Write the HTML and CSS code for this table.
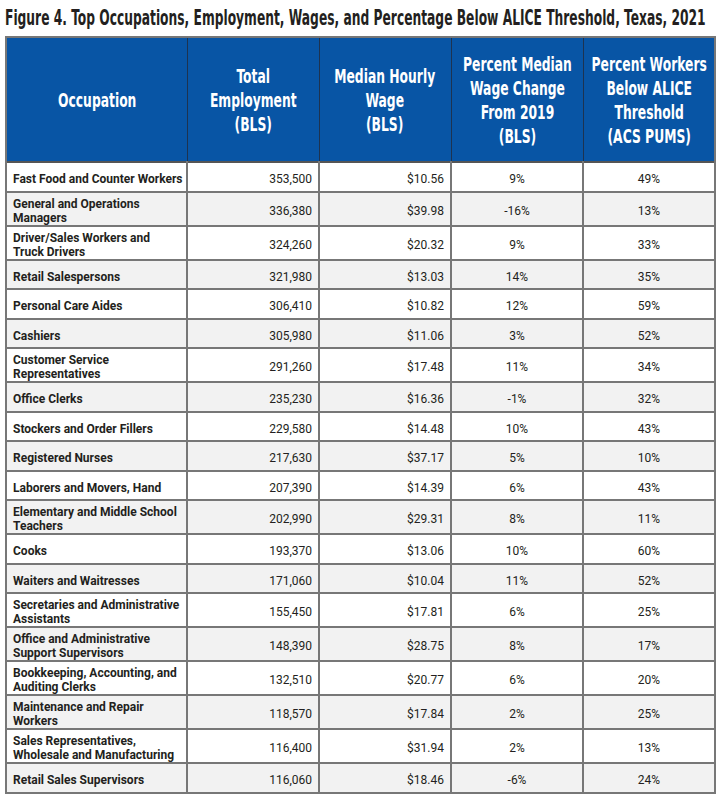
FILE: index.html
```html
<!DOCTYPE html>
<html>
<head>
<meta charset="utf-8">
<link rel="stylesheet" href="styles.css">
</head>
<body>
<div class="page">
  <h1 class="title"><span class="cond">Figure 4. Top Occupations, Employment, Wages, and Percentage Below ALICE Threshold, Texas, 2021</span></h1>
  <table class="data">
    <colgroup>
      <col class="c-occ"><col class="c-num"><col class="c-num"><col class="c-num"><col>
    </colgroup>
    <thead>
      <tr>
        <th><div class="hwrap"><span class="cond">Occupation</span></div></th>
        <th><div class="hwrap"><span class="cond">Total<br>Employment<br>(BLS)</span></div></th>
        <th><div class="hwrap"><span class="cond">Median Hourly<br>Wage<br>(BLS)</span></div></th>
        <th><div class="hwrap"><span class="cond">Percent Median<br>Wage Change<br>From 2019<br>(BLS)</span></div></th>
        <th><div class="hwrap"><span class="cond">Percent Workers<br>Below ALICE<br>Threshold<br>(ACS PUMS)</span></div></th>
      </tr>
    </thead>
    <tbody>
      <tr><td class="occ">Fast Food and Counter Workers</td><td class="r">353,500</td><td class="r">$10.56</td><td class="c">9%</td><td class="c">49%</td></tr>
      <tr class="two"><td class="occ">General and Operations<br>Managers</td><td class="r">336,380</td><td class="r">$39.98</td><td class="c">-16%</td><td class="c">13%</td></tr>
      <tr class="two"><td class="occ">Driver/Sales Workers and<br>Truck Drivers</td><td class="r">324,260</td><td class="r">$20.32</td><td class="c">9%</td><td class="c">33%</td></tr>
      <tr><td class="occ">Retail Salespersons</td><td class="r">321,980</td><td class="r">$13.03</td><td class="c">14%</td><td class="c">35%</td></tr>
      <tr><td class="occ">Personal Care Aides</td><td class="r">306,410</td><td class="r">$10.82</td><td class="c">12%</td><td class="c">59%</td></tr>
      <tr><td class="occ">Cashiers</td><td class="r">305,980</td><td class="r">$11.06</td><td class="c">3%</td><td class="c">52%</td></tr>
      <tr class="two"><td class="occ">Customer Service<br>Representatives</td><td class="r">291,260</td><td class="r">$17.48</td><td class="c">11%</td><td class="c">34%</td></tr>
      <tr><td class="occ">Office Clerks</td><td class="r">235,230</td><td class="r">$16.36</td><td class="c">-1%</td><td class="c">32%</td></tr>
      <tr><td class="occ">Stockers and Order Fillers</td><td class="r">229,580</td><td class="r">$14.48</td><td class="c">10%</td><td class="c">43%</td></tr>
      <tr><td class="occ">Registered Nurses</td><td class="r">217,630</td><td class="r">$37.17</td><td class="c">5%</td><td class="c">10%</td></tr>
      <tr><td class="occ">Laborers and Movers, Hand</td><td class="r">207,390</td><td class="r">$14.39</td><td class="c">6%</td><td class="c">43%</td></tr>
      <tr class="two"><td class="occ">Elementary and Middle School<br>Teachers</td><td class="r">202,990</td><td class="r">$29.31</td><td class="c">8%</td><td class="c">11%</td></tr>
      <tr><td class="occ">Cooks</td><td class="r">193,370</td><td class="r">$13.06</td><td class="c">10%</td><td class="c">60%</td></tr>
      <tr><td class="occ">Waiters and Waitresses</td><td class="r">171,060</td><td class="r">$10.04</td><td class="c">11%</td><td class="c">52%</td></tr>
      <tr class="two"><td class="occ">Secretaries and Administrative<br>Assistants</td><td class="r">155,450</td><td class="r">$17.81</td><td class="c">6%</td><td class="c">25%</td></tr>
      <tr class="two"><td class="occ">Office and Administrative<br>Support Supervisors</td><td class="r">148,390</td><td class="r">$28.75</td><td class="c">8%</td><td class="c">17%</td></tr>
      <tr class="two"><td class="occ">Bookkeeping, Accounting, and<br>Auditing Clerks</td><td class="r">132,510</td><td class="r">$20.77</td><td class="c">6%</td><td class="c">20%</td></tr>
      <tr class="two"><td class="occ">Maintenance and Repair<br>Workers</td><td class="r">118,570</td><td class="r">$17.84</td><td class="c">2%</td><td class="c">25%</td></tr>
      <tr class="two"><td class="occ">Sales Representatives,<br>Wholesale and Manufacturing</td><td class="r">116,400</td><td class="r">$31.94</td><td class="c">2%</td><td class="c">13%</td></tr>
      <tr><td class="occ">Retail Sales Supervisors</td><td class="r">116,060</td><td class="r">$18.46</td><td class="c">-6%</td><td class="c">24%</td></tr>
    </tbody>
  </table>
</div>
</body>
</html>
```

FILE: styles.css
```css
html, body {
  margin: 0;
  padding: 0;
  background: #ffffff;
}

.page {
  padding: 5px 0 0 5px;
  width: 711px;
}

.title {
  margin: 0;
  height: 31px;
  overflow: hidden;
  font-family: "DejaVu Sans", sans-serif;
  font-stretch: condensed;
  font-weight: bold;
  font-size: 22px;
  line-height: 26px;
  color: #231f20;
  white-space: nowrap;
}

.title .cond {
  display: inline-block;
  transform: scaleX(0.62);
  transform-origin: left center;
}

.data {
  width: 711px;
  border-collapse: collapse;
  table-layout: fixed;
  border: 2px solid #777777;
  font-family: Roboto, "Liberation Sans", sans-serif;
  font-size: 12px;
  color: #231f20;
}

.c-occ { width: 181px; }
.c-num { width: 132px; }

.data th {
  height: 123px;
  padding: 0;
  background: #0855a5;
  color: #ffffff;
  border: 1.5px solid #1d3350;
  border-top: 2px solid #777777;
  font-family: "DejaVu Sans", sans-serif;
  font-stretch: condensed;
  font-weight: bold;
  font-size: 20px;
  line-height: 24px;
  text-align: center;
  vertical-align: middle;
  white-space: nowrap;
  overflow: hidden;
}

.hwrap {
  display: flex;
  justify-content: center;
  width: 100%;
}

.data th .cond {
  flex: none;
  display: block;
  transform: scaleX(0.685);
  transform-origin: center center;
}

.data td {
  height: 22.5px;
  padding: 5px 6px 0;
  border: 2px solid #777777;
  line-height: 14px;
  vertical-align: middle;
  white-space: nowrap;
}

.data tr.two td {
  height: 28px;
  padding-top: 4px;
}

.data tbody tr:nth-child(even) td {
  background: #f2f2f2;
}

.data tbody tr td {
  border-top-color: #555555;
}

.data td.occ {
  font-weight: bold;
  text-align: left;
  padding-left: 6px;
}

.data td.r {
  text-align: right;
}

.data td.c {
  text-align: center;
}
```
